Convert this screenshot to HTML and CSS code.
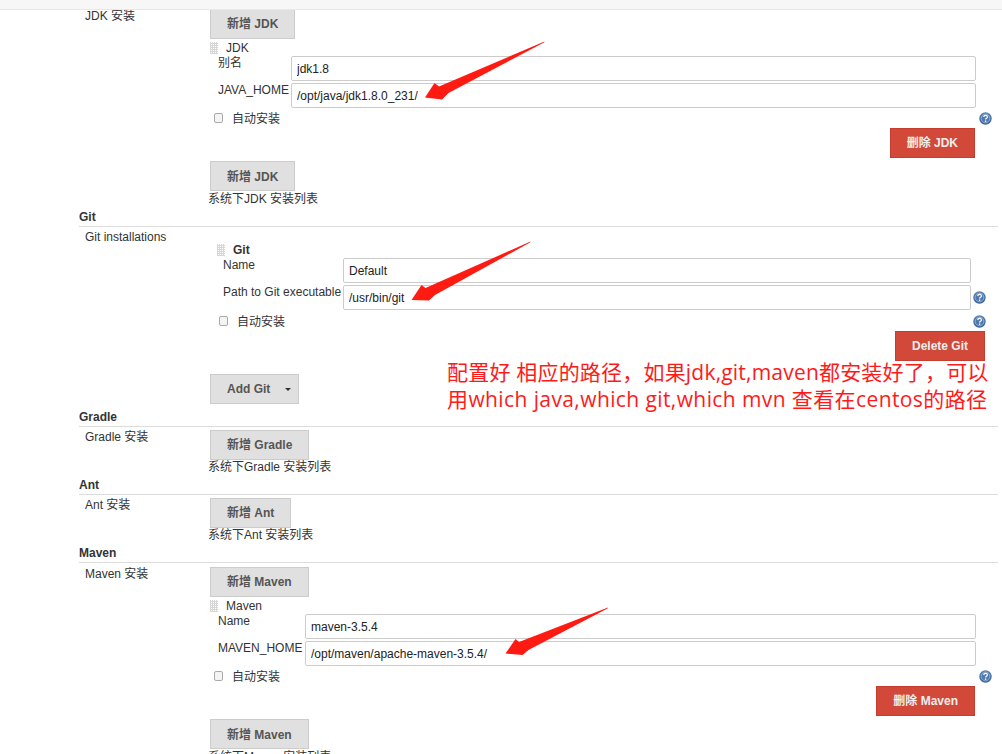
FILE: index.html
```html
<!DOCTYPE html>
<html lang="zh">
<head>
<meta charset="utf-8">
<title>全局工具配置</title>
<link rel="stylesheet" href="styles.css">
</head>
<body>
<div class="topbar"></div>
<main class="page">

  <section class="tool tool-jdk">
    <div class="field">
      <div class="field-label">JDK 安装</div>
      <div class="field-body">
        <button class="btn" type="button">新增 JDK</button>
        <div class="item item-jdk">
          <div class="item-title"><span class="handle"></span><span>JDK</span></div>
          <div class="form-row"><label class="row-label">别名</label><input class="text" value="jdk1.8"></div>
          <div class="form-row"><label class="row-label">JAVA_HOME</label><input class="text" value="/opt/java/jdk1.8.0_231/"></div>
          <div class="form-row check-row">
            <label class="check"><input type="checkbox"><span>自动安装</span></label>
            <svg class="help" viewBox="0 0 13 13"><use href="#help"/></svg>
          </div>
          <div class="actions"><button class="btn btn-danger" type="button">删除 JDK</button></div>
        </div>
        <button class="btn btn-add" type="button">新增 JDK</button>
        <div class="hint hint-jdk">系统下JDK 安装列表</div>
      </div>
    </div>
  </section>

  <section class="tool tool-git">
    <h2 class="tool-title">Git</h2>
    <div class="field">
      <div class="field-label">Git installations</div>
      <div class="field-body">
        <div class="item item-git">
          <div class="item-title"><span class="handle"></span><strong>Git</strong></div>
          <div class="form-row"><label class="row-label">Name</label><input class="text" value="Default"></div>
          <div class="form-row"><label class="row-label">Path to Git executable</label><input class="text" value="/usr/bin/git"><svg class="help" viewBox="0 0 13 13"><use href="#help"/></svg></div>
          <div class="form-row check-row">
            <label class="check"><input type="checkbox"><span>自动安装</span></label>
            <svg class="help" viewBox="0 0 13 13"><use href="#help"/></svg>
          </div>
          <div class="actions"><button class="btn btn-danger" type="button">Delete Git</button></div>
        </div>
        <button class="btn btn-menu" type="button"><span>Add Git</span><span class="caret"></span></button>
      </div>
    </div>
  </section>

  <section class="tool">
    <h2 class="tool-title">Gradle</h2>
    <div class="field">
      <div class="field-label">Gradle 安装</div>
      <div class="field-body">
        <button class="btn" type="button">新增 Gradle</button>
        <div class="hint">系统下Gradle 安装列表</div>
      </div>
    </div>
  </section>

  <section class="tool">
    <h2 class="tool-title">Ant</h2>
    <div class="field">
      <div class="field-label">Ant 安装</div>
      <div class="field-body">
        <button class="btn" type="button">新增 Ant</button>
        <div class="hint">系统下Ant 安装列表</div>
      </div>
    </div>
  </section>

  <section class="tool tool-maven">
    <h2 class="tool-title">Maven</h2>
    <div class="field">
      <div class="field-label">Maven 安装</div>
      <div class="field-body">
        <button class="btn" type="button">新增 Maven</button>
        <div class="item item-maven">
          <div class="item-title"><span class="handle"></span><span>Maven</span></div>
          <div class="form-row"><label class="row-label">Name</label><input class="text" value="maven-3.5.4"></div>
          <div class="form-row"><label class="row-label">MAVEN_HOME</label><input class="text" value="/opt/maven/apache-maven-3.5.4/"></div>
          <div class="form-row check-row">
            <label class="check"><input type="checkbox"><span>自动安装</span></label>
            <svg class="help" viewBox="0 0 13 13"><use href="#help"/></svg>
          </div>
          <div class="actions"><button class="btn btn-danger" type="button">删除 Maven</button></div>
        </div>
        <button class="btn btn-add" type="button">新增 Maven</button>
        <div class="hint hint-jdk">系统下Maven 安装列表</div>
      </div>
    </div>
  </section>
</main>

<p class="note"><span class="note-a">配置好 相应的路径，如果jdk,git,maven都安装好了，可以</span><span class="note-b">用which java,which git,which mvn 查看在centos的路径</span></p>

<svg class="arrows" viewBox="0 0 1002 754" aria-hidden="true">
  <polygon points="544.5,41.5 544,42.5 448.5,93 442,99.5 425,97.5 434.5,83 439,86.5"/>
  <polygon points="530.5,241.5 530,242.5 435,295 429,300.5 411.5,300 421.5,285 425.5,288"/>
  <polygon points="608,607.5 607.5,608.5 528.5,650 522.5,655 505.5,653.5 515.5,639 519,642"/>
</svg>

<svg class="defs" aria-hidden="true">
  <defs>
    <radialGradient id="helpFill" cx="50%" cy="35%" r="70%">
      <stop offset="0" stop-color="#7d9fcb"/>
      <stop offset="1" stop-color="#2f5a96"/>
    </radialGradient>
    <symbol id="help" viewBox="0 0 13 13">
      <circle cx="6.5" cy="6.5" r="6.2" fill="url(#helpFill)"/>
      <circle cx="6.5" cy="6.5" r="4.3" fill="#4f78ad" stroke="#a9c0dc" stroke-width=".7"/>
      <path d="M4.7 5.1c.1-1.2.9-1.7 1.9-1.7s1.8.6 1.8 1.5c0 1.4-1.8 1.3-1.8 2.7" fill="none" stroke="#fff" stroke-width="1.2"/>
      <rect x="5.9" y="8.5" width="1.4" height="1.4" fill="#fff"/>
    </symbol>
  </defs>
</svg>
</body>
</html>
```
FILE: styles.css
```css
* { box-sizing: border-box; }

html, body {
  margin: 0;
  height: 754px;
  overflow: hidden;
  background: #fff;
}

body {
  position: relative;
  font: 12px/14px "Liberation Sans", "Noto Sans CJK SC", sans-serif;
  color: #333;
}

.topbar {
  position: absolute;
  z-index: 2;
  top: 0;
  left: 0;
  right: 0;
  height: 10px;
  background: #f7f7f7;
  border-bottom: 1px solid #e8e8e8;
}

.page {
  padding: 9px 4px 0 79px;
}

.tool-title {
  margin: 2px 0 0;
  height: 19px;
  font-size: 12px;
  line-height: 18px;
  font-weight: bold;
  color: #333;
  border-bottom: 1px solid #dcdcdc;
}

.field {
  display: grid;
  grid-template-columns: 125px 1fr;
  padding-left: 6px;
}

.field-label {
  padding-top: 3px;
}

.tool-jdk .field-label { padding-top: 0; }
.tool-maven .field-label { padding-top: 4px; }

.field-body {
  min-width: 0;
  margin-right: 7px;
  padding-top: 3px;
}

.tool-jdk .field-body { padding-top: 0; }
.tool-maven .field-body { padding-top: 4px; }

.btn {
  display: block;
  height: 30px;
  padding: 0 16px;
  font: bold 12px/14px "Liberation Sans", "Noto Sans CJK SC", sans-serif;
  color: #555;
  background: #e0e0e0;
  border: 1px solid #ccc;
  border-radius: 0;
  white-space: nowrap;
}

.btn-add {
  margin-top: 3px;
  padding-top: 1px;
}

.btn-danger {
  color: #eee;
  background: #d24939;
  border-color: #c43d2e;
}

.btn-menu {
  display: flex;
  align-items: center;
  width: 89px;
  margin-top: 13px;
  margin-bottom: 2px;
}

.caret {
  flex: none;
  width: 0;
  height: 0;
  margin-left: 15px;
  border-top: 3px solid #333;
  border-left: 3.5px solid transparent;
  border-right: 3.5px solid transparent;
}

.hint {
  margin-left: -2px;
}

.hint-jdk { margin-top: 1px; }

.item {
  --label: 73px;
  --help: 15px;
  margin-top: 2px;
  padding-left: 8px;
}

.item-git {
  --label: 120px;
  --help: 14px;
  margin-top: 13px;
  margin-right: 6px;
  padding-left: 13px;
}

.item-maven {
  --label: 87px;
}

.item-title {
  display: flex;
  align-items: center;
  height: 14px;
  margin-left: -8px;
  margin-bottom: 1px;
}

.item-git .item-title {
  margin-left: -6px;
}

.item-title strong { font-weight: bold; }

.handle {
  width: 8px;
  height: 12px;
  margin-right: 8px;
  background: conic-gradient(#fff 25%, #d6d6d6 0) 0 0 / 2px 2px;
}

.form-row {
  display: grid;
  grid-template-columns: var(--label) 1fr var(--help);
  min-height: 25px;
  margin-bottom: 2px;
}

.row-label {
  line-height: 14px;
  white-space: nowrap;
}

.text {
  grid-column: 2;
  width: 100%;
  height: 25px;
  padding: 0 5px;
  font: 12px "Liberation Sans", "Noto Sans CJK SC", sans-serif;
  color: #222;
  background: #fff;
  border: 1px solid #ccc;
  border-radius: 2px;
  outline: 0;
}

.form-row > .help {
  grid-column: 3;
  justify-self: end;
  align-self: center;
  margin-right: -1px;
}

.help {
  display: block;
  width: 13px;
  height: 13px;
}

.check-row {
  min-height: 16px;
  margin-bottom: 2px;
  align-items: center;
}

.item-git .check-row {
  margin-top: 3px;
}

.check {
  grid-column: 1 / 3;
  display: flex;
  align-items: center;
  margin-left: -4px;
  line-height: 14px;
}

.check span {
  padding-top: 2px;
}

.check input {
  appearance: none;
  width: 9px;
  height: 10px;
  margin: 0 9px 0 0;
  background: #f4f4f4;
  border: 1px solid #aaa;
  border-radius: 2px;
}

.actions {
  display: flex;
  justify-content: flex-end;
  padding-right: 16px;
}

.item-git .actions { padding-right: 0; }

.note {
  position: absolute;
  z-index: 3;
  left: 447px;
  top: 359px;
  margin: 0;
  font: 21px/27px "Open Sans", "Noto Sans CJK SC", sans-serif;
  color: #ff1a1a;
  white-space: nowrap;
}

.note span { display: block; }
.note-a { letter-spacing: .2px; }
.note-b { letter-spacing: .4px; }

.arrows {
  position: absolute;
  z-index: 3;
  top: 0;
  left: 0;
  width: 1002px;
  height: 754px;
  fill: #ff1a12;
  pointer-events: none;
}

.defs {
  position: absolute;
  width: 0;
  height: 0;
}
```
